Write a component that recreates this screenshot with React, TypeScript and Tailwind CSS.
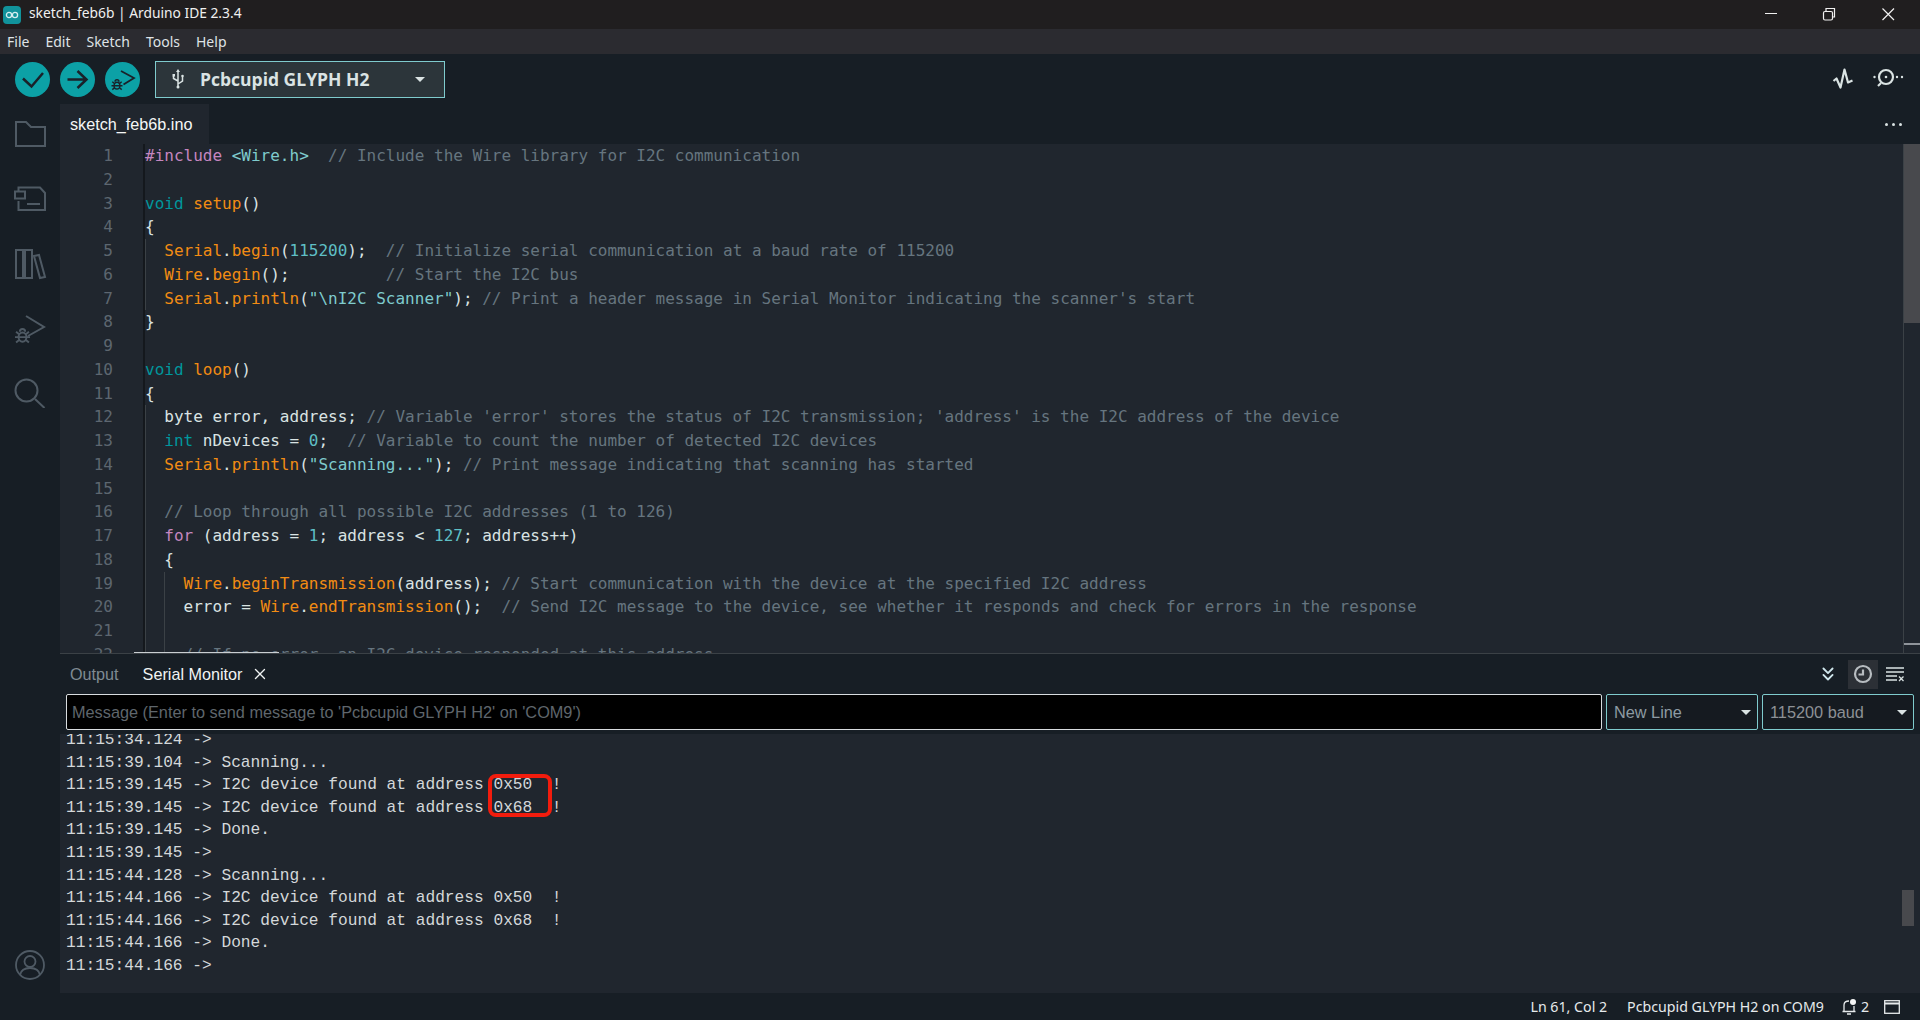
import { ChevronsDown, X } from 'lucide-react'
import type { ReactNode } from 'react'

const C = {
  k: 'text-[#00979d]',
  f: 'text-[#f28c13]',
  c: 'text-[#66757f]',
  n: 'text-[#5fbfc5]',
  s: 'text-[#7fcbcd]',
  p: 'text-[#c586c0]',
  w: 'text-[#dae3e3]',
}

type Tok = [string, keyof typeof C]

const CODE: Tok[][] = [
  [['#include', 'p'], [' ', 'w'], ['<Wire.h>', 's'], ['  // Include the Wire library for I2C communication', 'c']],
  [],
  [['void', 'k'], [' ', 'w'], ['setup', 'f'], ['()', 'w']],
  [['{', 'w']],
  [['  ', 'w'], ['Serial', 'f'], ['.', 'w'], ['begin', 'f'], ['(', 'w'], ['115200', 'n'], [');', 'w'], ['  // Initialize serial communication at a baud rate of 115200', 'c']],
  [['  ', 'w'], ['Wire', 'f'], ['.', 'w'], ['begin', 'f'], ['();', 'w'], ['          // Start the I2C bus', 'c']],
  [['  ', 'w'], ['Serial', 'f'], ['.', 'w'], ['println', 'f'], ['(', 'w'], ['"\\nI2C Scanner"', 's'], [');', 'w'], [" // Print a header message in Serial Monitor indicating the scanner's start", 'c']],
  [['}', 'w']],
  [],
  [['void', 'k'], [' ', 'w'], ['loop', 'f'], ['()', 'w']],
  [['{', 'w']],
  [['  byte error, address;', 'w'], [" // Variable 'error' stores the status of I2C transmission; 'address' is the I2C address of the device", 'c']],
  [['  ', 'w'], ['int', 'k'], [' nDevices = ', 'w'], ['0', 'n'], [';', 'w'], ['  // Variable to count the number of detected I2C devices', 'c']],
  [['  ', 'w'], ['Serial', 'f'], ['.', 'w'], ['println', 'f'], ['(', 'w'], ['"Scanning..."', 's'], [');', 'w'], [' // Print message indicating that scanning has started', 'c']],
  [],
  [['  // Loop through all possible I2C addresses (1 to 126)', 'c']],
  [['  ', 'w'], ['for', 'p'], [' (address = ', 'w'], ['1', 'n'], ['; address < ', 'w'], ['127', 'n'], ['; address++)', 'w']],
  [['  {', 'w']],
  [['    ', 'w'], ['Wire', 'f'], ['.', 'w'], ['beginTransmission', 'f'], ['(address);', 'w'], [' // Start communication with the device at the specified I2C address', 'c']],
  [['    error = ', 'w'], ['Wire', 'f'], ['.', 'w'], ['endTransmission', 'f'], ['();', 'w'], ['  // Send I2C message to the device, see whether it responds and check for errors in the response', 'c']],
  [],
  [['    // If no error, an I2C device responded at this address', 'c']],
]

const LOG = [
  '11:15:34.124 ->',
  '11:15:39.104 -> Scanning...',
  '11:15:39.145 -> I2C device found at address 0x50  !',
  '11:15:39.145 -> I2C device found at address 0x68  !',
  '11:15:39.145 -> Done.',
  '11:15:39.145 ->',
  '11:15:44.128 -> Scanning...',
  '11:15:44.166 -> I2C device found at address 0x50  !',
  '11:15:44.166 -> I2C device found at address 0x68  !',
  '11:15:44.166 -> Done.',
  '11:15:44.166 ->',
]

// which code lines carry an indent guide
const guide1 = (i: number) => (i >= 4 && i <= 6) || i >= 11
const guide2 = (i: number) => i >= 18

function RoundButton({ children }: { children: ReactNode }) {
  return (
    <div className="w-[35px] h-[35px] rounded-full bg-[#0ca1a6] flex items-center justify-center shrink-0">
      <svg width="35" height="35" viewBox="0 0 35 35" fill="none" stroke="#1a2129" strokeWidth="2.5">
        {children}
      </svg>
    </div>
  )
}

// small beetle used by the debugger icons, s is the overall size
function Bug({ x, y, s, color }: { x: number; y: number; s: number; color: string }) {
  return (
    <g transform={`translate(${x} ${y}) scale(${s / 14})`} stroke={color} strokeWidth="1.8" fill="none">
      <path d="M4.500 3.500a2.500 2.500 0 0 1 5 0" />
      <ellipse cx="7" cy="8.500" rx="3.700" ry="4.300" />
      <path d="M1 3.500l2.800 2.300M13 3.500l-2.800 2.300M0 8.500h3.300M14 8.500h-3.300M1 13.500l2.800-2.300M13 13.500l-2.800-2.300M3.500 8.500h7" />
    </g>
  )
}

function SideIcon({ children }: { children: ReactNode }) {
  return (
    <svg width="36" height="36" viewBox="0 0 36 36" fill="none" stroke="#4f5a64" strokeWidth="2" className="shrink-0">
      {children}
    </svg>
  )
}

function Caret({ className }: { className: string }) {
  return <span className={`w-0 h-0 border-l-[5px] border-r-[5px] border-t-[5px] border-l-transparent border-r-transparent border-t-[#dae3e3] ${className}`} />
}

export default function App() {
  return (
    <div className="w-[1920px] h-[1020px] flex flex-col overflow-hidden bg-[#171e25] font-['Liberation_Sans',sans-serif]">
      {/* title bar */}
      <div className="h-[29px] bg-[#201e1f] flex items-center shrink-0">
        <div className="w-[18px] h-[18px] ml-[3px] rounded-[4px] bg-[#11939b] flex items-center justify-center">
          <svg width="14" height="8" viewBox="0 0 14 8" fill="none" stroke="#d5eef0" strokeWidth="1.300">
            <circle cx="4" cy="4" r="2.600" />
            <circle cx="10" cy="4" r="2.600" />
          </svg>
        </div>
        <span className="ml-[8px] -mt-[2px] text-[13.800px] text-[#f0f0f0] font-['Noto_Sans',sans-serif]">sketch_feb6b | Arduino IDE 2.3.4</span>
        <div className="ml-auto flex items-center h-full">
          <svg width="58" height="29" viewBox="0 0 58 29" stroke="#f0f0f0" fill="none">
            <path d="M5 13.500h12" />
          </svg>
          <svg width="58" height="29" viewBox="0 0 58 29" stroke="#f0f0f0" fill="none" strokeWidth="1.200">
            <rect x="5.500" y="11.500" width="9" height="8.500" rx="1.500" />
            <path d="M8 11V8.500h8.500V17H15" />
          </svg>
          <svg width="44" height="29" viewBox="0 0 44 29" stroke="#f0f0f0" fill="none" strokeWidth="1.200">
            <path d="M6.500 8.500l11.500 11.500M18 8.500L6.500 20" />
          </svg>
        </div>
      </div>

      {/* menu bar */}
      <div className="h-[25px] bg-[#2b2b30] flex items-center shrink-0 pl-[7px] gap-[16px] text-[14px] text-[#dfe3e6] font-['Noto_Sans',sans-serif]">
        <span>File</span>
        <span>Edit</span>
        <span>Sketch</span>
        <span>Tools</span>
        <span>Help</span>
      </div>

      {/* toolbar */}
      <div className="h-[50px] flex items-center shrink-0 pl-[15px] pr-[16px]">
        <div className="flex gap-[10px]">
          <RoundButton>
            <path d="M8 16.500l8.500 8L28 11" />
          </RoundButton>
          <RoundButton>
            <path d="M7.500 17.500h19M17.500 9l9 8.500-9 8.500" />
          </RoundButton>
          <RoundButton>
            <path d="M16 9l13 7-10.500 6.500" strokeWidth="1.800" />
            <Bug x={6.500} y={17} s={11} color="#1a2129" />
          </RoundButton>
        </div>
        <div className="ml-[15px] w-[290px] h-[37px] border border-[#7fcbcd] bg-[#2c353a] flex items-center pl-[14px] pr-[19px]">
          <svg width="16" height="22" viewBox="0 0 16 22" fill="none" stroke="#dae3e3" strokeWidth="1.500">
            <path d="M8 3v16M8 13l-4.500-2.500V8M8 16l4.500-3V9" />
            <path d="M8 1l2 3H6z" fill="#dae3e3" stroke="none" />
            <circle cx="8" cy="19" r="1.500" fill="#dae3e3" stroke="none" />
            <rect x="2.500" y="6" width="2.500" height="2.500" fill="#dae3e3" stroke="none" />
            <circle cx="12.500" cy="8" r="1.300" fill="#dae3e3" stroke="none" />
          </svg>
          <span className="ml-[14px] text-[17.500px] font-bold text-[#dae3e3] font-['Open_Sans',sans-serif]">Pcbcupid GLYPH H2</span>
          <Caret className="ml-auto" />
        </div>
        <div className="ml-auto flex items-center gap-[18px]">
          <svg width="22" height="24" viewBox="0 0 22 24" fill="none" stroke="#dae3e3" strokeWidth="2.200" strokeLinejoin="round">
            <path d="M1.500 14l3-2.500 4 9 4-18 3.500 13 4.500-2" />
          </svg>
          <svg width="32" height="24" viewBox="0 0 32 24" fill="none" stroke="#dae3e3" strokeWidth="2.200">
            <circle cx="14" cy="10" r="7" />
            <circle cx="14" cy="10" r="1.300" fill="#dae3e3" stroke="none" />
            <circle cx="2.500" cy="10" r="1.200" fill="#dae3e3" stroke="none" />
            <circle cx="25" cy="10" r="1.200" fill="#dae3e3" stroke="none" />
            <circle cx="30" cy="10" r="1.200" fill="#dae3e3" stroke="none" />
            <path d="M9 16l-3 3" />
          </svg>
        </div>
      </div>

      <div className="flex-1 flex min-h-0">
        {/* side bar */}
        <div className="w-[60px] shrink-0 flex flex-col items-center pt-[12px] pb-[40px]">
          <div className="flex flex-col items-center gap-[28px]">
            <SideIcon>
              <path d="M4 30V6h10l5 5h14v19z" />
            </SideIcon>
            <SideIcon>
              <path d="M6.500 11V7.500H28l5 5.500v17H6.500v-9" />
              <path d="M3 11.500h10v7H3zM15 24h13" />
            </SideIcon>
            <SideIcon>
              <path d="M4 6h7v28H4zM13 6h7v28h-7zM22 12l5-1 6 22-5 1z" />
            </SideIcon>
            <SideIcon>
              <path d="M14 8l18 11-16 9" />
              <Bug x={3} y={20} s={15} color="#4f5a64" />
            </SideIcon>
            <SideIcon>
              <circle cx="14.500" cy="18.500" r="11" />
              <path d="M23 27l9.500 9" />
            </SideIcon>
          </div>
          <svg width="30" height="30" viewBox="0 0 30 30" fill="none" stroke="#4f5a64" strokeWidth="1.800" className="mt-auto">
            <circle cx="15" cy="15" r="14" />
            <circle cx="15" cy="11.500" r="5.500" />
            <path d="M5 25c1-5 5-7 10-7s9 2 10 7" />
          </svg>
        </div>

        <div className="flex-1 min-w-0 flex flex-col">
          {/* tabs */}
          <div className="h-[40px] shrink-0 flex">
            <div className="w-[149px] bg-[#20262e] flex items-center pl-[10px] text-[16.200px] text-[#f5f7f7]">sketch_feb6b.ino</div>
            <div className="ml-auto flex items-center gap-[4px] pr-[18px]">
              <span className="w-[3px] h-[3px] rounded-full bg-[#dae3e3]" />
              <span className="w-[3px] h-[3px] rounded-full bg-[#dae3e3]" />
              <span className="w-[3px] h-[3px] rounded-full bg-[#dae3e3]" />
            </div>
          </div>

          {/* editor */}
          <div className="h-[510px] shrink-0 bg-[#20262e] flex overflow-hidden relative border-b border-[#3b4146]">
            <div className="w-[53px] shrink-0 flex flex-col text-right text-[16px] leading-[23.750px] text-[#5d6670] font-['DejaVu_Sans_Mono',monospace]">
              {CODE.map((_, i) => (
                <div key={i} className="h-[23.750px]">{i + 1}</div>
              ))}
            </div>
            <div className="w-[30px] shrink-0" />
            <div className="flex-1 min-w-0 border-l-[2px] border-[#14181d] text-[16px] leading-[23.750px] whitespace-pre font-['DejaVu_Sans_Mono',monospace]">
              {CODE.map((line, i) => (
                <div key={i} className="h-[23.750px] relative">
                  {guide1(i) && <span className="absolute left-0 top-0 bottom-0 w-px bg-[#3b4146]" />}
                  {guide2(i) && <span className="absolute left-[19px] top-0 bottom-0 w-px bg-[#3b4146]" />}
                  {line.map((t, j) => (
                    <span key={j} className={C[t[1]]}>{t[0]}</span>
                  ))}
                </div>
              ))}
            </div>
            {/* horizontal scroll thumb */}
            <div className="absolute left-[74px] bottom-0 w-[145px] h-px bg-[#c9ced2]" />
            {/* scrollbar */}
            <div className="absolute right-0 top-0 bottom-0 w-[17px] border-l border-[#3b4146] bg-[#20262e]">
              <div className="h-[179px] bg-[#48494d]" />
              <div className="absolute bottom-[8px] left-0 right-0 h-[2px] bg-[#8f949a]" />
            </div>
          </div>

          {/* panel tabs */}
          <div className="h-[40px] shrink-0 flex items-center pl-[10px] pr-[16px] text-[16.200px]">
            <span className="text-[#7f8a92]">Output</span>
            <span className="ml-[24px] text-[#f0f3f3]">Serial Monitor</span>
            <X size={18} strokeWidth={1.800} className="ml-[9px] text-[#f0f3f3]" />
            <div className="ml-auto flex items-center">
              <ChevronsDown size={22} strokeWidth={2} className="text-[#cfe6ec] mr-[9px]" />
              <div className="w-[30px] h-[29px] bg-[#2c3036] flex items-center justify-center">
                <svg width="20" height="20" viewBox="0 0 20 20" fill="none" stroke="#b7bcc0" strokeWidth="2.200">
                  <circle cx="10" cy="10" r="8" />
                  <path d="M10 5.500V10.500H5.500" />
                </svg>
              </div>
              <svg width="18" height="16" viewBox="0 0 18 16" fill="none" stroke="#dae3e3" strokeWidth="1.300" className="ml-[8px]">
                <path d="M0 2h18M0 6h18M0 10h11M0 14h11M13 10.500l4.500 4.500M17.500 10.500L13 15" />
              </svg>
            </div>
          </div>

          {/* message row */}
          <div className="h-[36px] shrink-0 flex gap-[4px] pl-[6px] pr-[6px]">
            <div className="flex-1 min-w-0 bg-black border border-[#d8dcdf] rounded-[2px] flex items-center pl-[5px] text-[16.300px] text-[#5f666c] whitespace-nowrap">
              Message (Enter to send message to 'Pcbcupid GLYPH H2' on 'COM9')
            </div>
            <div className="w-[152px] bg-[#151a20] border border-[#7fcbcd] rounded-[2px] flex items-center pl-[7px] pr-[6px] text-[16.300px] text-[#8d9aa3]">
              New Line
              <Caret className="ml-auto" />
            </div>
            <div className="w-[152px] bg-[#151a20] border border-[#7fcbcd] rounded-[2px] flex items-center pl-[7px] pr-[6px] text-[16.300px] text-[#8d9196]">
              115200 baud
              <Caret className="ml-auto" />
            </div>
          </div>

          {/* serial output */}
          <div className="flex-1 min-h-0 mt-[4px] bg-[#20262e] relative overflow-hidden pl-[6px] font-['Liberation_Mono',monospace] text-[16.200px] leading-[22.600px] text-[#d4d8da] whitespace-pre">
            <div className="-mt-[5px]">
              {LOG.map((l, i) => (
                <div key={i} className="h-[22.600px]">{l}</div>
              ))}
            </div>
            {/* red annotation */}
            <div className="absolute left-[428px] top-[40px] w-[64px] h-[43px] border-[4px] border-[#f21c0d] rounded-[8px]" />
            <div className="absolute right-[6px] top-[156px] w-[12px] h-[36px] bg-[#48494d]" />
          </div>

          {/* status bar */}
          <div className="h-[27px] shrink-0 flex items-center justify-end pr-[20px] text-[14.200px] text-[#e6eaec] font-['Noto_Sans',sans-serif]">
            <span>Ln 61, Col 2</span>
            <span className="ml-[20px]">Pcbcupid GLYPH H2 on COM9</span>
            <svg width="16" height="18" viewBox="0 0 16 18" fill="none" stroke="#e6eaec" strokeWidth="1.300" className="ml-[17px]">
              <path d="M3 13V7c0-3 2-4 5-4M13 8v5M1.500 13.500h13M6 16h4" />
              <circle cx="12" cy="4" r="3" fill="#f4f6f6" stroke="none" />
            </svg>
            <span className="ml-[4px]">2</span>
            <svg width="16" height="14" viewBox="0 0 16 14" fill="none" stroke="#e6eaec" strokeWidth="1.300" className="ml-[15px]">
              <rect x="0.700" y="0.700" width="14.600" height="12.600" />
              <path d="M1 3.500h14" strokeWidth="2" />
            </svg>
          </div>
        </div>
      </div>
    </div>
  )
}
